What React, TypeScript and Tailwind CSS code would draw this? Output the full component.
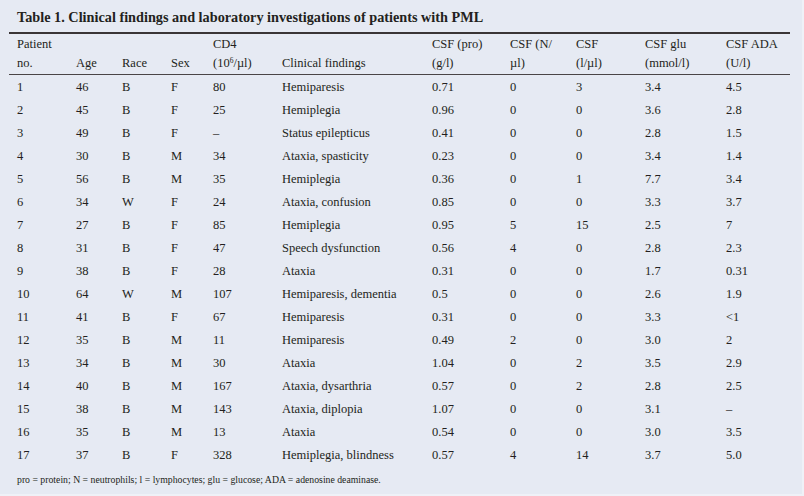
import React from "react";

const rows: string[][] = [
  ["1", "46", "B", "F", "80", "Hemiparesis", "0.71", "0", "3", "3.4", "4.5"],
  ["2", "45", "B", "F", "25", "Hemiplegia", "0.96", "0", "0", "3.6", "2.8"],
  ["3", "49", "B", "F", "–", "Status epilepticus", "0.41", "0", "0", "2.8", "1.5"],
  ["4", "30", "B", "M", "34", "Ataxia, spasticity", "0.23", "0", "0", "3.4", "1.4"],
  ["5", "56", "B", "M", "35", "Hemiplegia", "0.36", "0", "1", "7.7", "3.4"],
  ["6", "34", "W", "F", "24", "Ataxia, confusion", "0.85", "0", "0", "3.3", "3.7"],
  ["7", "27", "B", "F", "85", "Hemiplegia", "0.95", "5", "15", "2.5", "7"],
  ["8", "31", "B", "F", "47", "Speech dysfunction", "0.56", "4", "0", "2.8", "2.3"],
  ["9", "38", "B", "F", "28", "Ataxia", "0.31", "0", "0", "1.7", "0.31"],
  ["10", "64", "W", "M", "107", "Hemiparesis, dementia", "0.5", "0", "0", "2.6", "1.9"],
  ["11", "41", "B", "F", "67", "Hemiparesis", "0.31", "0", "0", "3.3", "<1"],
  ["12", "35", "B", "M", "11", "Hemiparesis", "0.49", "2", "0", "3.0", "2"],
  ["13", "34", "B", "M", "30", "Ataxia", "1.04", "0", "2", "3.5", "2.9"],
  ["14", "40", "B", "M", "167", "Ataxia, dysarthria", "0.57", "0", "2", "2.8", "2.5"],
  ["15", "38", "B", "M", "143", "Ataxia, diplopia", "1.07", "0", "0", "3.1", "–"],
  ["16", "35", "B", "M", "13", "Ataxia", "0.54", "0", "0", "3.0", "3.5"],
  ["17", "37", "B", "F", "328", "Hemiplegia, blindness", "0.57", "4", "14", "3.7", "5.0"],
];

const headers: [React.ReactNode, React.ReactNode][] = [
  ["Patient", "no."],
  ["", "Age"],
  ["", "Race"],
  ["", "Sex"],
  ["CD4", <span key="cd4">(10<sup className="text-[7.5px]">6</sup>/µl)</span>],
  ["", "Clinical findings"],
  ["CSF (pro)", "(g/l)"],
  ["CSF (N/", "µl)"],
  ["CSF", "(l/µl)"],
  ["CSF glu", "(mmol/l)"],
  ["CSF ADA", "(U/l)"],
];

const grid =
  "grid grid-cols-[59px_46px_49px_42px_69px_150px_78px_66px_69px_81px_1fr]";

export default function App() {
  return (
    <div
      className="w-[804px] h-[496px] bg-[#e6eaf3] text-[#231f20] border-r-2 border-b-2 border-[#eff1f7] overflow-hidden"
      style={{ fontFamily: '"Liberation Serif", "Times New Roman", serif' }}
    >
      <div className="ml-[9px] w-[781px]">
        <div className="h-[32px] pl-[8px] pt-[3px] flex items-center text-[14.25px] font-bold">
          Table 1. Clinical findings and laboratory investigations of patients with PML
        </div>
        <div className="border-t-2 border-[#3a3536]" />
        <div className={`${grid} pl-[8px] pt-[1px] h-[40px] text-[12.5px] leading-[19px]`}>
          {headers.map((h, i) => (
            <div key={i} className="flex flex-col">
              <span className="h-[19px] whitespace-nowrap">{h[0]}</span>
              <span className="h-[19px] whitespace-nowrap">{h[1]}</span>
            </div>
          ))}
        </div>
        <div className="border-t border-[#4a4546]" />
        {rows.map((r, i) => (
          <div key={i} className={`${grid} pl-[8px] pt-[1px] h-[23px] items-center text-[12.5px]`}>
            {r.map((c, j) => (
              <span key={j} className="whitespace-nowrap">
                {c}
              </span>
            ))}
          </div>
        ))}
        <div className="h-[28px] pl-[8px] flex items-center text-[9.75px]">
          pro = protein; N = neutrophils; l = lymphocytes; glu = glucose; ADA = adenosine deaminase.
        </div>
      </div>
    </div>
  );
}
